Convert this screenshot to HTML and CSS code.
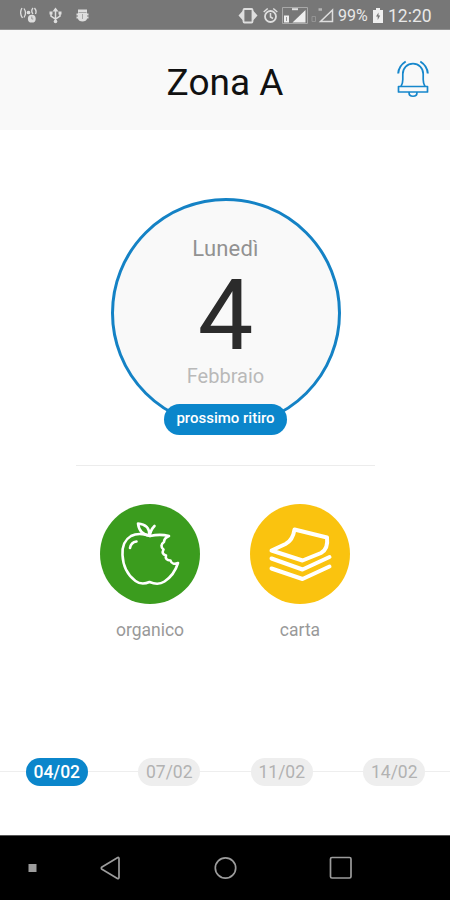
FILE: index.html
```html
<!DOCTYPE html>
<html lang="it">

<head>
    <meta charset="utf-8">
    <meta name="viewport" content="width=device-width, initial-scale=1.0">
    <title>Zona A</title>
    <link rel="stylesheet" href="styles.css">
</head>

<body>

    <div class="status">
        <svg class="status-left" width="80" height="30" viewBox="0 0 80 30" fill="none" stroke="#dedede" stroke-width="1.3">
            <!-- hotspot -->
            <path d="M2 8q-3 5 .5 10M4 8.500q3 4.500 0 9M13 8q-2.500 3 0 6M14.500 8q2.500 3 1 6" />
            <circle cx="8.500" cy="12.500" r="1.200" fill="#dedede" />
            <circle cx="11.800" cy="18.700" r="3.900" fill="#dedede" stroke="none" />
            <path d="M11.800 16.500v2.500h1.500" stroke="#999" stroke-width="1" />
            <!-- usb -->
            <path d="M35.500 9v12M31 13v3l4.500 3 4.500-3v-3" stroke-width="1.500" />
            <path d="M32.500 11.500l3-4 3 4z" fill="#dedede" stroke="none" />
            <circle cx="35.500" cy="21.500" r="1.800" fill="#dedede" stroke="none" />
            <path d="M29.500 11.500h3v3h-3zM38.500 11.500h3v3h-3z" fill="#dedede" stroke="none" />
            <!-- debug -->
            <path d="M58 13.500v-4h9v4zM58 13.500h9v5c0 4-9 4-9 0z" fill="#dedede" stroke="none" />
            <path d="M56.500 14.500h12M56.500 17.500h12" stroke-width="1.800" />
            <path d="M58.500 12.500h8M62.500 14v5" stroke="#a8a8a8" stroke-width="1" />
        </svg>
        <div class="status-right">
            <svg width="100" height="30" viewBox="0 0 100 30" fill="none" stroke="#dedede" stroke-width="1.800">
                <!-- vibrate -->
                <rect x="5.500" y="9" width="9" height="13.500" rx="1" />
                <path d="M5 10.500v10l-4.500-5zM15 10.500v10l4.500-5z" fill="#dedede" stroke="none" />
                <!-- alarm -->
                <circle cx="32.500" cy="16.500" r="5.500" />
                <path d="M32.500 13v4l2.500 1.500M25.700 12l4-3.500M39.300 12l-4-3.500" stroke-width="1.500" />
                <!-- sim 1 -->
                <path d="M44.500 7.500h25v16h-25z" stroke="#a8a8a8" stroke-width="1" />
                <path d="M67.500 10v12.500h-13z" fill="#efefef" stroke="none" />
                <path d="M46 15.500h5v7h-5z" fill="#efefef" stroke="none" />
                <path d="M48.500 17v4" stroke="#999" stroke-width="1" />
                <path d="M54 9.200h6" stroke-width="2" />
                <!-- sim 2 -->
                <path d="M74 16.500h3.500v5h-3.500z" stroke="#949494" stroke-width="1" />
                <path d="M80.500 9.500h3.500" stroke-width="2.500" stroke="#b5b5b5" />
                <path d="M94.500 10v11.500h-12z" stroke-width="1.500" />
            </svg>
            <span class="battery">99%</span>
            <svg class="cell" width="10" height="30" viewBox="0 0 10 30">
                <path d="M3 8h4v2h3v13h-10v-13h3z" fill="#efefef" />
                <path d="M5.500 12.500l-2.500 4h1.700v3.500l2.500-4.500h-1.700z" fill="#777" />
            </svg>
            <span class="clock">12:20</span>
        </div>
    </div>

    <header>
        <h1>Zona A</h1>
        <svg class="bell" width="34" height="40" viewBox="0 0 34 40" fill="none" stroke="#1687cc" stroke-width="1.700" stroke-linejoin="round">
            <path d="M5 27.500c1.200-2 1.800-4 1.800-7v-5.500c0-6 4.400-10.300 10.200-10.300s10.200 4.300 10.200 10.300v5.500c0 3 .6 5 1.800 7" />
            <path d="M2.500 27.500h29v5.500h-29zM13 33.500c0 5 8 5 8 0" />
            <path d="M2.200 14.500c.3-4.800 2.800-9 7.500-12M31.800 14.500c-.3-4.800-2.800-9-7.500-12" stroke-width="2" />
        </svg>
    </header>

    <main>
        <section class="giorno">
            <p class="settimana">Lunedì</p>
            <p class="numero">4</p>
            <p class="mese">Febbraio</p>
            <span class="prossimo">prossimo ritiro</span>
        </section>

        <section class="rifiuti">
            <article class="rifiuto">
                <svg class="organico" width="100" height="100" viewBox="0 0 100 100" fill="none" stroke="#fff" stroke-width="2.600" stroke-linecap="round" stroke-linejoin="round">
                    <path d="M50 32C43 29.500 36 29.500 31 32c-6 3.500-9 10-8.500 19c.5 11 5 20 13 26c4 3 8 3.500 14 1c6 2.500 10.500 2.500 15-.5c6-4 11-10.500 13.500-18.500c-3.500 1.500-6.500 1-7.500-2.500c-3.500 0-5.500-2-4.500-5c-3.500-1-4-3-2.500-6c-3-2.500-2.500-5.500.5-7.500c0-3 1.500-4.500 5-6c-6-1.500-12-1.500-19 0" />
                    <path d="M50 32c0-4.500 1.500-7 4.500-10M49.500 31.500c-6-.5-10.500-4.500-11.500-12c8 .5 11.500 5 11.500 12" />
                    <path d="M30 44c.7-4 3-6 6.500-6.500" />
                </svg>
                <p>organico</p>
            </article>
            <article class="rifiuto">
                <svg class="carta" width="100" height="100" viewBox="0 0 100 100" fill="none" stroke="#fff" stroke-width="4" stroke-linecap="round" stroke-linejoin="round">
                    <path d="M44.500 25.500l32.500 8c1 8-.5 12.500-6 15.500L52.500 56.500L21.500 46.500l14-6.500c6-3 8-8 9-14.500z" />
                    <path d="M21.500 54.500l31 11L79.500 53M21.500 64.500l31 10.500L79.500 62.500" />
                </svg>
                <p>carta</p>
            </article>
        </section>

        <nav class="date">
            <span class="data scelta">04/02</span>
            <span class="data">07/02</span>
            <span class="data">11/02</span>
            <span class="data">14/02</span>
        </nav>
    </main>

    <footer>
        <svg width="450" height="64" viewBox="0 0 450 64" fill="none" stroke="#9c9c9c" stroke-width="1.700" stroke-linejoin="round">
            <rect x="28.500" y="28" width="8" height="8" fill="#9c9c9c" stroke="none" />
            <path d="M119 22.500v19c0 1-.8 1.300-1.600.9L102 33.200c-.9-.6-.9-1.500 0-2.200l15.400-9.300c.8-.5 1.600-.2 1.600.8z" />
            <circle cx="225.500" cy="32" r="10.200" />
            <rect x="330.500" y="21.500" width="20.500" height="20.500" rx="1.500" />
        </svg>
    </footer>

</body>

</html>
```
FILE: styles.css
```css
body {
    margin: 0;
    height: 900px;
    display: flex;
    flex-direction: column;
    font-family: "Roboto", sans-serif;
    background-color: white;
    overflow: hidden;
}

h1,
p {
    margin: 0;
}

svg {
    display: block;
    flex: none;
}

.status {
    box-sizing: border-box;
    height: 30px;
    padding: 0 17px 0 20px;
    display: flex;
    justify-content: space-between;
    background-color: #777;
    border-bottom: 1px solid #929292;
    color: #e8e8e8;
    line-height: 32px;
}

.status-right {
    display: flex;
}

.battery {
    width: 35px;
    font-size: 16px;
}

.cell {
    margin-right: 5px;
}

.clock {
    width: 45px;
    font-size: 17.5px;
}

header {
    height: 100px;
    display: grid;
    grid-template-columns: 54px 1fr 54px;
    align-items: center;
    background-color: #f9f9f9;
}

h1 {
    grid-column: 2;
    text-align: center;
    font-size: 37px;
    font-weight: 400;
    line-height: 44px;
    padding-top: 6px;
    color: #111;
}

.bell {
    margin-bottom: 2px;
}

main {
    flex: 1;
    display: flex;
    flex-direction: column;
    align-items: center;
}

.giorno {
    box-sizing: border-box;
    width: 230px;
    height: 230px;
    margin-top: 68px;
    margin-left: 1px;
    padding-top: 34px;
    border: 3px solid #1482c5;
    border-radius: 50%;
    background-color: #f9f9f9;
    display: flex;
    flex-direction: column;
    align-items: center;
}

.settimana {
    font-size: 22px;
    line-height: 28px;
    letter-spacing: 0.2px;
    color: #929292;
}

.numero {
    font-size: 99px;
    line-height: 104px;
    color: #2b2b2b;
}

.mese {
    font-size: 20px;
    line-height: 18px;
    color: #b9b9b9;
}

.prossimo {
    flex: none;
    width: 123px;
    height: 31px;
    margin-top: 19px;
    border-radius: 16px;
    background-color: #0b86cb;
    color: white;
    font-size: 15px;
    font-weight: 500;
    line-height: 29px;
    text-align: center;
}

.rifiuti {
    box-sizing: border-box;
    width: 299px;
    margin-top: 37px;
    padding-top: 38px;
    border-top: 1px solid #ececec;
    display: flex;
    justify-content: center;
    gap: 50px;
}

.rifiuto {
    width: 100px;
    text-align: center;
    font-size: 17.5px;
    line-height: 24px;
    color: #999;
}

.rifiuto svg {
    border-radius: 50%;
    margin-bottom: 14px;
}

.organico {
    background-color: #3b9c1e;
}

.carta {
    background-color: #fac30f;
}

.date {
    width: 100%;
    margin-top: auto;
    margin-bottom: 49px;
    display: grid;
    grid-template-columns: repeat(4, 1fr);
    justify-items: center;
    background: linear-gradient(#eee, #eee) 0 13px / 100% 1px no-repeat;
}

.data {
    width: 62px;
    height: 28px;
    margin-left: 1px;
    border-radius: 14px;
    background-color: #eee;
    color: #b2b2b2;
    font-size: 17.5px;
    line-height: 28px;
    text-align: center;
}

.scelta {
    background-color: #0b86cb;
    color: white;
    font-weight: 500;
}

footer {
    height: 64px;
    border-top: 1px solid #555;
    background-color: black;
}
```
